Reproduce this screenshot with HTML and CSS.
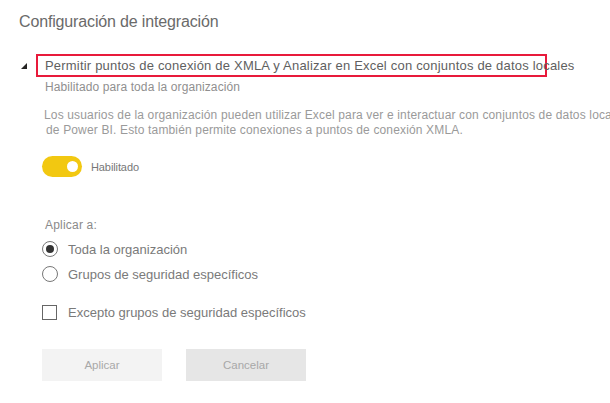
FILE: index.html
```html
<!DOCTYPE html>
<html lang="es">
<head>
<meta charset="utf-8">
<link rel="stylesheet" href="styles.css">
</head>
<body>
<div class="page">
  <h1 class="title">Configuración de integración</h1>
  <div class="setting">
    <div class="setting-head">
      <span class="caret"></span>
      <span class="setting-name">Permitir puntos de conexión de XMLA y Analizar en Excel con conjuntos de datos locales</span>
    </div>
    <div class="setting-body">
      <div class="status">Habilitado para toda la organización</div>
      <p class="desc"><span class="line">Los usuarios de la organización pueden utilizar Excel para ver e interactuar con conjuntos de datos locales</span><span class="line"> de Power BI. Esto también permite conexiones a puntos de conexión XMLA.</span></p>
      <div class="toggle-row">
        <span class="toggle"><span class="knob"></span></span>
        <span class="toggle-label">Habilitado</span>
      </div>
      <div class="apply-label">Aplicar a:</div>
      <div class="option">
        <span class="radio checked"></span>
        <span class="opt-text">Toda la organización</span>
      </div>
      <div class="option">
        <span class="radio"></span>
        <span class="opt-text">Grupos de seguridad específicos</span>
      </div>
      <div class="option check-option">
        <span class="checkbox"></span>
        <span class="opt-text">Excepto grupos de seguridad específicos</span>
      </div>
      <div class="buttons">
        <button class="btn btn-apply">Aplicar</button>
        <button class="btn btn-cancel">Cancelar</button>
      </div>
    </div>
  </div>
</div>
</body>
</html>
```
FILE: styles.css
```css
html, body {
  margin: 0;
  padding: 0;
  background: #fff;
  overflow: hidden;
}
body {
  font-family: "Liberation Sans", Arial, sans-serif;
  width: 610px;
  height: 403px;
}
.page {
  padding: 12px 0 0 19px;
}
.title {
  margin: 0;
  font-size: 16px;
  font-weight: normal;
  color: #6a6a6a;
  line-height: 20px;
  letter-spacing: -0.15px;
}
.setting {
  margin-top: 22px;
}
.setting-head {
  display: flex;
  align-items: center;
  height: 23px;
}
.caret {
  width: 0;
  height: 0;
  border-left: 6px solid transparent;
  border-bottom: 6px solid #252423;
  margin: 0 9px 0 2px;
}
.setting-name {
  border: 2px solid #e81a3b;
  height: 19px;
  width: 500px;
  padding-left: 7px;
  font-size: 13px;
  line-height: 19px;
  color: #5f5f5f;
  white-space: nowrap;
  letter-spacing: 0.2px;
}
.setting-body {
  padding-left: 26px;
}
.status {
  margin-top: 2px;
  font-size: 12px;
  line-height: 16px;
  color: #8f8f8f;
  letter-spacing: 0.1px;
}
.desc {
  margin: 13px 0 0 -1px;
  font-size: 12px;
  line-height: 15px;
  color: #9a9a9a;
  white-space: nowrap;
  letter-spacing: 0.15px;
}
.line {
  display: block;
}
.line:nth-child(2) {
  padding-left: 2px;
}
.toggle-row {
  display: flex;
  align-items: center;
  margin-top: 18px;
  margin-left: -3px;
  height: 21px;
}
.toggle {
  width: 40px;
  height: 21px;
  border-radius: 11px;
  background: #f2c811;
  display: flex;
  align-items: center;
  justify-content: flex-end;
  padding-right: 4px;
  box-sizing: border-box;
}
.knob {
  width: 11px;
  height: 11px;
  border-radius: 50%;
  background: #fff;
}
.toggle-label {
  margin-left: 9px;
  font-size: 11px;
  color: #777;
  letter-spacing: -0.1px;
}
.apply-label {
  margin-top: 40px;
  font-size: 12px;
  line-height: 16px;
  color: #8a8a8a;
  letter-spacing: 0.2px;
}
.option {
  display: flex;
  align-items: center;
  margin-left: -3px;
  height: 18px;
  margin-top: 7px;
}
.check-option {
  margin-top: 20px;
}
.radio {
  width: 16px;
  height: 16px;
  border: 1px solid #777;
  border-radius: 50%;
  box-sizing: border-box;
  display: flex;
  align-items: center;
  justify-content: center;
  flex: none;
}
.radio.checked::after {
  content: "";
  width: 8px;
  height: 8px;
  border-radius: 50%;
  background: #333;
}
.checkbox {
  width: 15px;
  height: 15px;
  border: 1px solid #666;
  box-sizing: border-box;
  flex: none;
  margin-right: 1px;
}
.opt-text {
  margin-left: 10px;
  font-size: 13px;
  color: #7a7a7a;
  letter-spacing: 0;
}
.buttons {
  display: flex;
  gap: 24px;
  margin-top: 28px;
  margin-left: -3px;
}
.btn {
  width: 120px;
  height: 32px;
  border: none;
  font-family: "Liberation Sans", Arial, sans-serif;
  font-size: 11.5px;
  color: #a8a8a8;
  padding: 0;
}
.btn-apply {
  background: #f3f3f3;
}
.btn-cancel {
  background: #e6e6e6;
}
```
